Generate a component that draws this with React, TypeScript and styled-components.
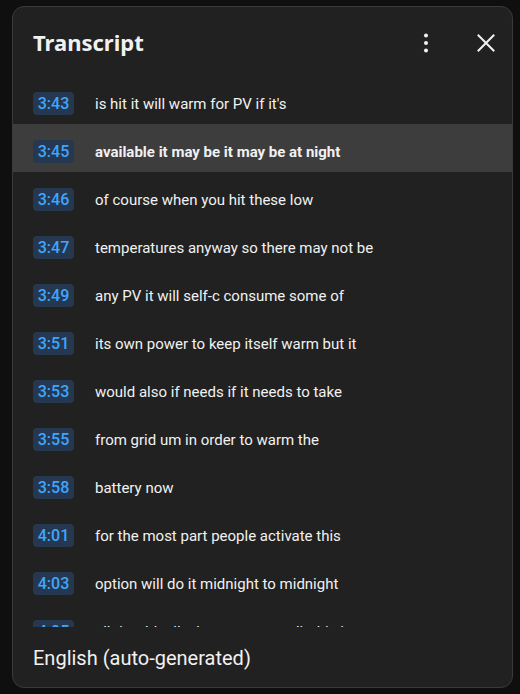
import styled, { createGlobalStyle } from 'styled-components';

const GlobalStyle = createGlobalStyle`
  html, body {
    margin: 0;
    padding: 0;
    background: #0f0f0f;
  }
  * { box-sizing: border-box; }
`;

const lines = [
  { time: '3:43', text: "is hit it will warm for PV if it's" },
  { time: '3:45', text: 'available it may be it may be at night', active: true },
  { time: '3:46', text: 'of course when you hit these low' },
  { time: '3:47', text: 'temperatures anyway so there may not be' },
  { time: '3:49', text: 'any PV it will self-c consume some of' },
  { time: '3:51', text: 'its own power to keep itself warm but it' },
  { time: '3:53', text: 'would also if needs if it needs to take' },
  { time: '3:55', text: 'from grid um in order to warm the' },
  { time: '3:58', text: 'battery now' },
  { time: '4:01', text: 'for the most part people activate this' },
  { time: '4:03', text: 'option will do it midnight to midnight' },
  { time: '4:05', text: 'all day. Ideally that can save a lit this is' },
];

const Page = styled.div`
  padding: 6px 7px 6px 12px;
`;

const Panel = styled.div`
  width: 501px;
  height: 682px;
  background: #212121;
  border: 1px solid #3a3a3a;
  border-radius: 12px;
  display: flex;
  flex-direction: column;
  overflow: hidden;
  font-family: Roboto, 'Liberation Sans', sans-serif;
  color: #f1f1f1;
`;

const Header = styled.div`
  height: 69px;
  flex-shrink: 0;
  display: flex;
  align-items: center;
  padding: 2px 6px 0 20px;
`;

const Title = styled.h2`
  margin: 0 0 1px 0;
  flex: 1;
  font-family: 'Noto Sans', sans-serif;
  font-size: 22px;
  font-weight: 700;
  color: #f1f1f1;
`;

const IconButton = styled.button<{ $gap?: number }>`
  width: 40px;
  height: 40px;
  border: none;
  background: none;
  padding: 0;
  display: flex;
  align-items: center;
  justify-content: center;
  color: #f1f1f1;
  margin-left: ${(p) => p.$gap ?? 0}px;
`;

const List = styled.div`
  flex: 1;
  overflow: hidden;
`;

const Row = styled.div<{ $active?: boolean }>`
  height: 48px;
  display: flex;
  align-items: center;
  padding: 7px 0 0 20px;
  background: ${(p) => (p.$active ? '#3d3d3d' : 'transparent')};
`;

const Stamp = styled.span`
  width: 41px;
  height: 23px;
  border-radius: 4px;
  background: #263850;
  color: #3ea6ff;
  font-size: 16px;
  font-weight: 500;
  display: flex;
  align-items: center;
  justify-content: center;
  margin-right: 21px;
  flex-shrink: 0;
`;

const Line = styled.span<{ $active?: boolean }>`
  font-size: 15px;
  font-weight: ${(p) => (p.$active ? 700 : 400)};
  color: #f1f1f1;
  white-space: nowrap;
`;

const Footer = styled.div`
  height: 60px;
  flex-shrink: 0;
  display: flex;
  align-items: center;
  padding: 2px 20px 0 20px;
  font-size: 20px;
  color: #f1f1f1;
`;

export default function App() {
  return (
    <Page>
      <GlobalStyle />
      <Panel>
        <Header>
          <Title>Transcript</Title>
          <IconButton aria-label="More actions">
            <svg width="24" height="24" viewBox="0 0 24 24" fill="#f1f1f1">
              <circle cx="12" cy="4.5" r="2" />
              <circle cx="12" cy="12" r="2" />
              <circle cx="12" cy="19.5" r="2" />
            </svg>
          </IconButton>
          <IconButton aria-label="Close" $gap={20}>
            <svg width="24" height="24" viewBox="0 0 24 24" fill="none" stroke="#f1f1f1" strokeWidth="2" strokeLinecap="square">
              <path d="M4.5 4.5 L19.5 19.5 M19.5 4.5 L4.5 19.5" />
            </svg>
          </IconButton>
        </Header>
        <List>
          {lines.map((l) => (
            <Row key={l.time} $active={l.active}>
              <Stamp>{l.time}</Stamp>
              <Line $active={l.active}>{l.text}</Line>
            </Row>
          ))}
        </List>
        <Footer>English (auto-generated)</Footer>
      </Panel>
    </Page>
  );
}
